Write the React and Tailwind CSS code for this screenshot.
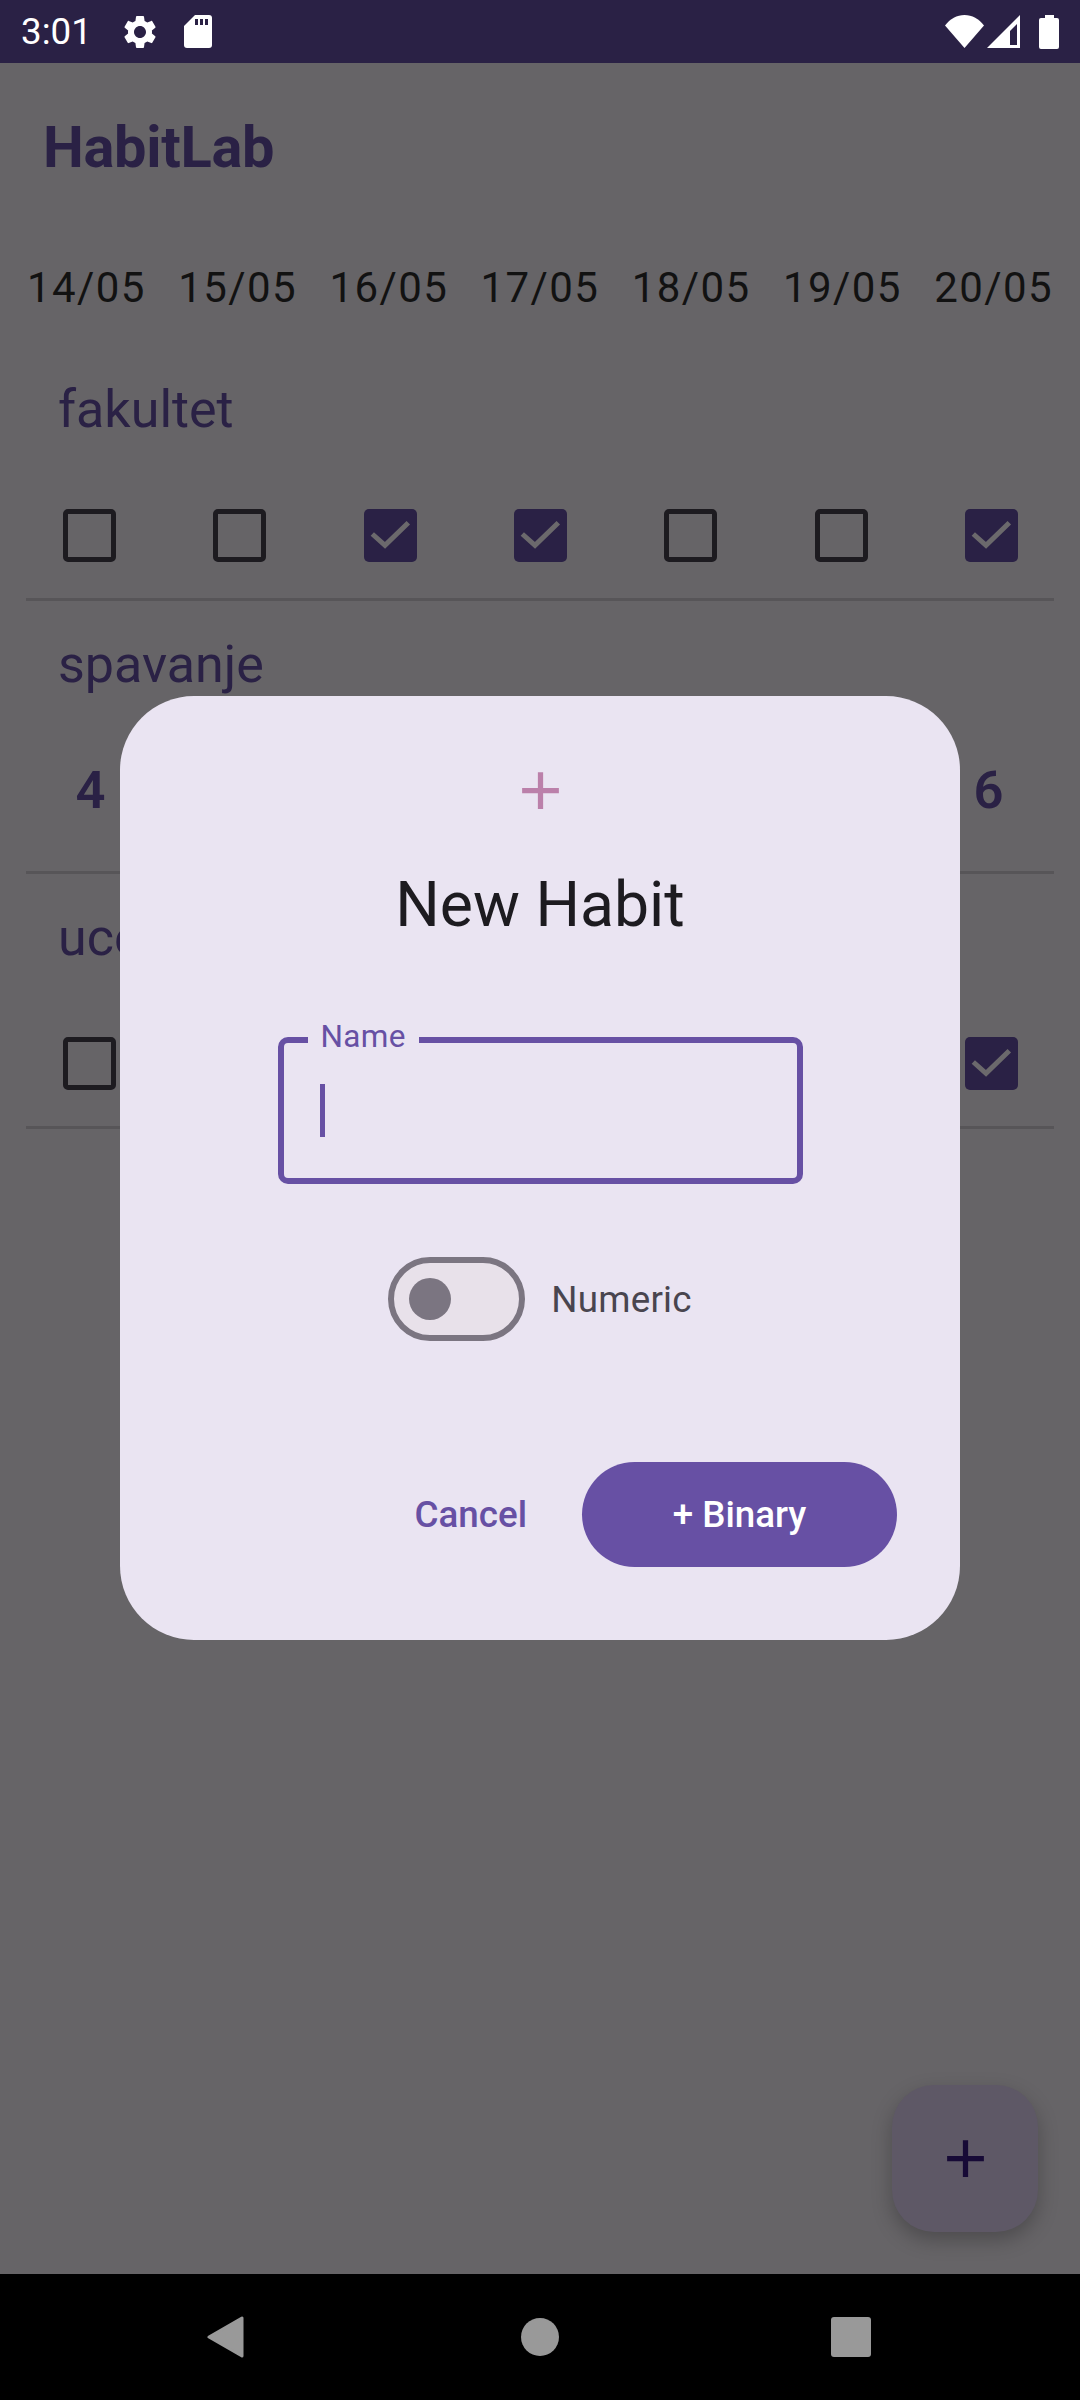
const DATES = ["14/05", "15/05", "16/05", "17/05", "18/05", "19/05", "20/05"];
const PLUS = "M19 13h-6v6h-2v-6H5v-2h6V5h2v6h6v2z";
const GEAR =
  "M19.14 12.94c.04-.3.06-.61.06-.94 0-.32-.02-.64-.07-.94l2.03-1.58c.18-.14.23-.41.12-.61l-1.92-3.32c-.12-.22-.37-.29-.59-.22l-2.39.96c-.5-.38-1.03-.7-1.62-.94l-.36-2.54c-.04-.24-.24-.41-.48-.41h-3.84c-.24 0-.43.17-.47.41l-.36 2.54c-.59.24-1.13.57-1.62.94l-2.39-.96c-.22-.08-.47 0-.59.22L2.74 8.87c-.12.21-.08.47.12.61l2.03 1.58c-.05.3-.09.63-.09.94s.02.64.07.94l-2.03 1.58c-.18.14-.23.41-.12.61l1.92 3.32c.12.22.37.29.59.22l2.39-.96c.5.38 1.03.7 1.62.94l.36 2.54c.05.24.24.41.48.41h3.84c.24 0 .44-.17.47-.41l.36-2.54c.59-.24 1.13-.56 1.62-.94l2.39.96c.22.08.47 0 .59-.22l1.92-3.32c.12-.22.07-.47-.12-.61l-2.01-1.58zM12 15.6c-1.98 0-3.6-1.62-3.6-3.6s1.62-3.6 3.6-3.6 3.6 1.62 3.6 3.6-1.62 3.6-3.6 3.6z";

const Checkbox = ({ checked }) =>
  checked ? (
    <div className="w-[53px] h-[53px] rounded-[5px] bg-[#2a2145]">
      <svg width="53" height="53" viewBox="0 0 53 53" fill="none">
        <path d="M8.3 25 21 36.3 44.3 13.7" stroke="#6b696c" strokeWidth="5" />
      </svg>
    </div>
  ) : (
    <div className="w-[53px] h-[53px] rounded-[5px] border-[5px] border-[#1d1b20]" />
  );

const HabitRow = ({ name, children }) => (
  <div className="mx-[26px] mt-[33px] first:mt-[66px]">
    <p className="pl-[32px] text-[52px] leading-[62px] text-[#2a2145]">{name}</p>
    {children}
    <div className="h-[3px] bg-[#575558]" />
  </div>
);

const CheckRow = ({ values }) => (
  <div className="flex justify-between pl-[37px] pr-[36px] mt-[68px] mb-[36px]">
    {values.map((checked, idx) => (
      <Checkbox key={idx} checked={checked} />
    ))}
  </div>
);

const StatusBar = () => (
  <div className="h-[63px] bg-[#2a2145] flex items-center pl-[21px] pr-[21px] shrink-0">
    <span className="w-[99px] text-[36.75px] leading-[44px] text-white">3:01</span>
    <svg width="40" height="40" viewBox="0 0 24 24" fill="#fff">
      <path d={GEAR} />
    </svg>
    <svg className="ml-[24px]" width="28" height="33" viewBox="0 0 28 33" fill="#fff">
      <path d="M11 0H25a3 3 0 0 1 3 3V30a3 3 0 0 1-3 3H3a3 3 0 0 1-3-3V11Z" />
      <rect x="11" y="4" width="3" height="6" fill="#2a2145" />
      <rect x="16" y="4" width="3" height="6" fill="#2a2145" />
      <rect x="21" y="4" width="3" height="6" fill="#2a2145" />
    </svg>
    <svg className="ml-auto" width="39" height="33" viewBox="0 0 39 33" fill="#fff">
      <path d="M0 10.5C5 4 12 0 19.5 0S34 4 39 10.5L19.5 33Z" />
    </svg>
    <svg className="ml-[3px]" width="33" height="33" viewBox="0 0 33 33" fill="#fff">
      <path d="M0 33 33 0V33Z" />
      <path d="M23 16 30 9V30H23Z" fill="#2a2145" />
    </svg>
    <svg className="ml-[19px]" width="20" height="34" viewBox="0 0 20 34" fill="#fff">
      <path d="M6 0H15V3H18a2 2 0 0 1 2 2V32a2 2 0 0 1-2 2H2a2 2 0 0 1-2-2V5a2 2 0 0 1 2-2H6Z" />
    </svg>
  </div>
);

const NavBar = () => (
  <div className="h-[126px] bg-black flex items-center pl-[207px] shrink-0">
    <svg width="37" height="42" viewBox="0 0 37 42" fill="#999" stroke="#999" strokeWidth="3" strokeLinejoin="round">
      <path d="M2 21 35 2V40Z" />
    </svg>
    <div className="ml-[277px] w-[38px] h-[38px] rounded-full bg-[#999]" />
    <div className="ml-[272px] w-[40px] h-[40px] rounded-[3px] bg-[#999]" />
  </div>
);

const NewHabitDialog = () => (
  <div className="absolute left-[120px] top-[633px] w-[840px] h-[944px] rounded-[74px] bg-[#eae4f2] flex flex-col items-center pt-[63px]">
    <svg width="63" height="63" viewBox="0 0 24 24" fill="#bb80aa">
      <path d={PLUS} />
    </svg>
    <h2 className="mt-[46px] text-[62.5px] leading-[74px] text-[#1d1b20]">New Habit</h2>

    {/* Focused name field */}
    <div className="relative mt-[95px] w-[525px] h-[147px] rounded-[10px] border-[6px] border-[#6750a4] flex items-center pl-[36px]">
      <span className="absolute left-[24px] -top-[25px] px-[13px] bg-[#eae4f2] text-[31.5px] leading-[37px] tracking-[0.3px] text-[#6750a4]">
        Name
      </span>
      <div className="w-[5px] h-[53px] bg-[#6750a4]" />
    </div>

    {/* Numeric switch */}
    <div className="mt-[73px] flex items-center gap-[26px]">
      <div className="w-[137px] h-[84px] rounded-full border-[6px] border-[#7b7581] bg-[#e8e1ea] flex items-center pl-[15px]">
        <div className="w-[42px] h-[42px] rounded-full bg-[#7b7581]" />
      </div>
      <span className="pt-[2px] text-[36.75px] leading-[44px] tracking-[0.25px] text-[#49454f]">Numeric</span>
    </div>

    <div className="mt-[121px] self-stretch flex justify-end items-center gap-[55px] pr-[63px]">
      <span className="text-[36.75px] leading-[44px] font-medium text-[#6750a4]">Cancel</span>
      <div className="w-[315px] h-[105px] rounded-full bg-[#6750a4] flex items-center justify-center">
        <span className="text-[36.75px] leading-[44px] font-medium text-white">+ Binary</span>
      </div>
    </div>
  </div>
);

const App = () => {
  return (
    <div className="w-[1080px] h-[2400px] flex flex-col font-['Roboto',sans-serif] overflow-hidden">
      <StatusBar />

      <main className="relative flex-1 bg-[#666467]">
        <h1 className="pl-[43px] pt-[51px] text-[57.75px] leading-[66px] tracking-[-0.3px] font-bold text-[#2a2145]">
          HabitLab
        </h1>

        <div className="flex justify-between mt-[83px] mx-[27px] text-[42px] leading-[50px] tracking-[1.4px] text-[#121212]">
          {DATES.map((date) => (
            <span key={date}>{date}</span>
          ))}
        </div>

        <div>
          <HabitRow name="fakultet">
            <CheckRow values={[false, false, true, true, false, false, true]} />
          </HabitRow>

          <HabitRow name="spavanje">
            <div className="flex justify-between pl-[49.5px] pr-[52.5px] mt-[63px] mb-[50px] text-[52.5px] leading-[62px] font-semibold text-[#2a2145]">
              <span className="w-[28px]">4</span>
              <span className="w-[28px]">6</span>
            </div>
          </HabitRow>

          <HabitRow name="ucenje">
            <CheckRow values={[false, false, false, false, false, false, true]} />
          </HabitRow>
        </div>

        <div className="absolute right-[42px] bottom-[42px] w-[146px] h-[147px] rounded-[42px] bg-[#5e5866] shadow-[0_8px_20px_rgba(0,0,0,0.25)] flex items-center justify-center">
          <svg width="63" height="63" viewBox="0 0 24 24" fill="#170a36">
            <path d={PLUS} />
          </svg>
        </div>

        <NewHabitDialog />
      </main>

      <NavBar />
    </div>
  );
};

export default App;
